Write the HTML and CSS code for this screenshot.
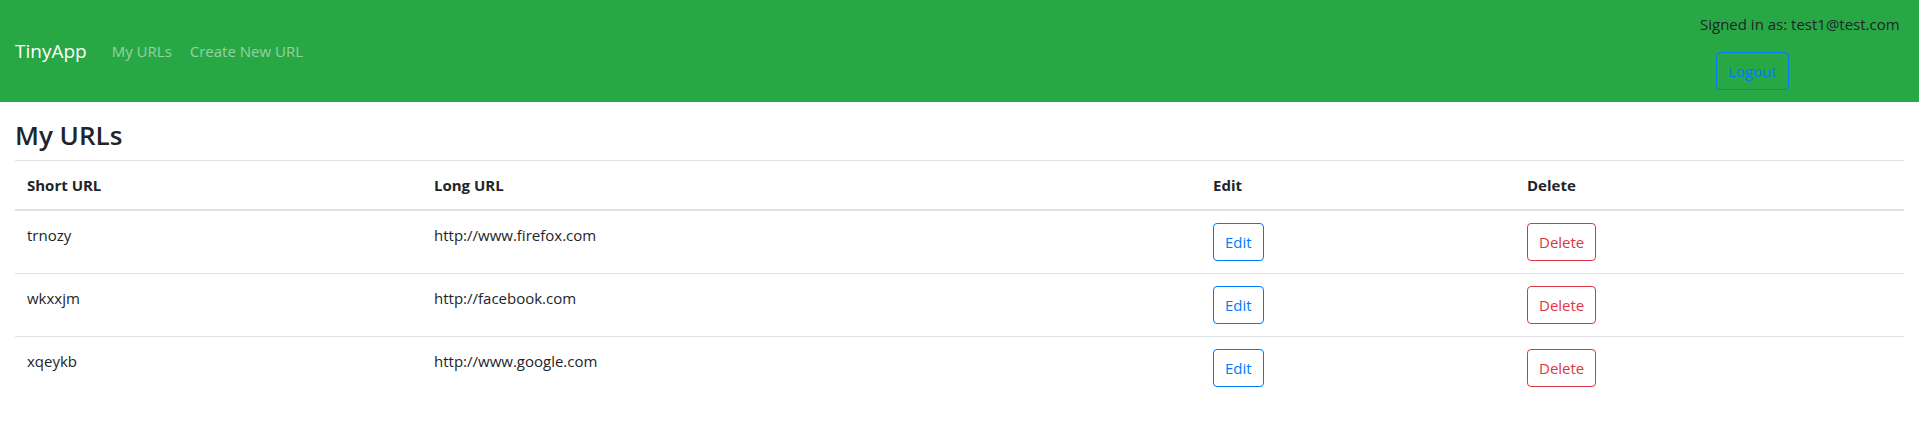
FILE: index.html
```html
<!DOCTYPE html>
<html lang="en">
<head>
<meta charset="utf-8">
<title>TinyApp</title>
<link rel="stylesheet" href="styles.css">
</head>
<body>
<nav class="navbar">
  <a class="brand" href="#">TinyApp</a>
  <div class="nav-links">
    <a class="nav-link" href="#">My URLs</a>
    <a class="nav-link" href="#">Create New URL</a>
  </div>
  <div class="user-box">
    <div class="signed">Signed in as: test1@test.com</div>
    <button class="btn btn-blue logout">Logout</button>
  </div>
</nav>
<main class="content">
  <h3 class="title">My URLs</h3>
  <table class="table">
    <colgroup>
      <col class="c-short"><col class="c-long"><col class="c-edit"><col class="c-del">
    </colgroup>
    <thead>
      <tr><th>Short URL</th><th>Long URL</th><th>Edit</th><th>Delete</th></tr>
    </thead>
    <tbody>
      <tr><td>trnozy</td><td>http://www.firefox.com</td><td><button class="btn btn-blue">Edit</button></td><td><button class="btn btn-red">Delete</button></td></tr>
      <tr><td>wkxxjm</td><td>http://facebook.com</td><td><button class="btn btn-blue">Edit</button></td><td><button class="btn btn-red">Delete</button></td></tr>
      <tr><td>xqeykb</td><td>http://www.google.com</td><td><button class="btn btn-blue">Edit</button></td><td><button class="btn btn-red">Delete</button></td></tr>
    </tbody>
  </table>
</main>
</body>
</html>
```
FILE: styles.css
```css
* { box-sizing: border-box; }
body {
  margin: 0;
  font-family: "Open Sans", "Noto Sans", sans-serif;
  font-size: 15px;
  line-height: 24px;
  color: #212529;
  background: #fff;
}
.navbar {
  display: flex;
  align-items: center;
  background: #28a745;
  height: 102px;
  padding: 0 16px 0 15px;
}
.brand {
  color: #fff;
  text-decoration: none;
  font-size: 19px;
  margin-right: 25px;
}
.nav-links { display: flex; gap: 18px; flex: 1; }
.nav-link {
  color: rgba(255,255,255,.5);
  text-decoration: none;
  font-size: 15px;
}
.user-box {
  align-self: stretch;
  display: flex;
  flex-direction: column;
  align-items: flex-start;
  padding-top: 12px;
  width: 203px;
}
.signed { font-size: 15px; }
.logout {
  margin-top: 16px;
  margin-left: 16px;
  padding: 6px 12px;
}
.btn {
  font-family: inherit;
  font-size: 15px;
  line-height: 24px;
  background: transparent;
  border: 1px solid;
  border-radius: 4px;
  padding: 6px 11px;
  height: 38px;
}
.btn-blue { color: #007bff; border-color: #007bff; }
.btn-red { color: #dc3545; border-color: #dc3545; }
.content { padding: 0 15px; }
.title {
  font-size: 26px;
  font-weight: 600;
  line-height: 34px;
  margin: 16px 0 8px;
}
.table {
  width: 100%;
  border-collapse: collapse;
}
.c-short { width: 407px; }
.c-long { width: 779px; }
.c-edit { width: 314px; }
.table th, .table td {
  text-align: left;
  vertical-align: top;
  padding: 12px;
  border-top: 1px solid #dee2e6;
}
.table th { font-weight: 700; }
.table thead th { border-bottom: 2px solid #dee2e6; }
```
